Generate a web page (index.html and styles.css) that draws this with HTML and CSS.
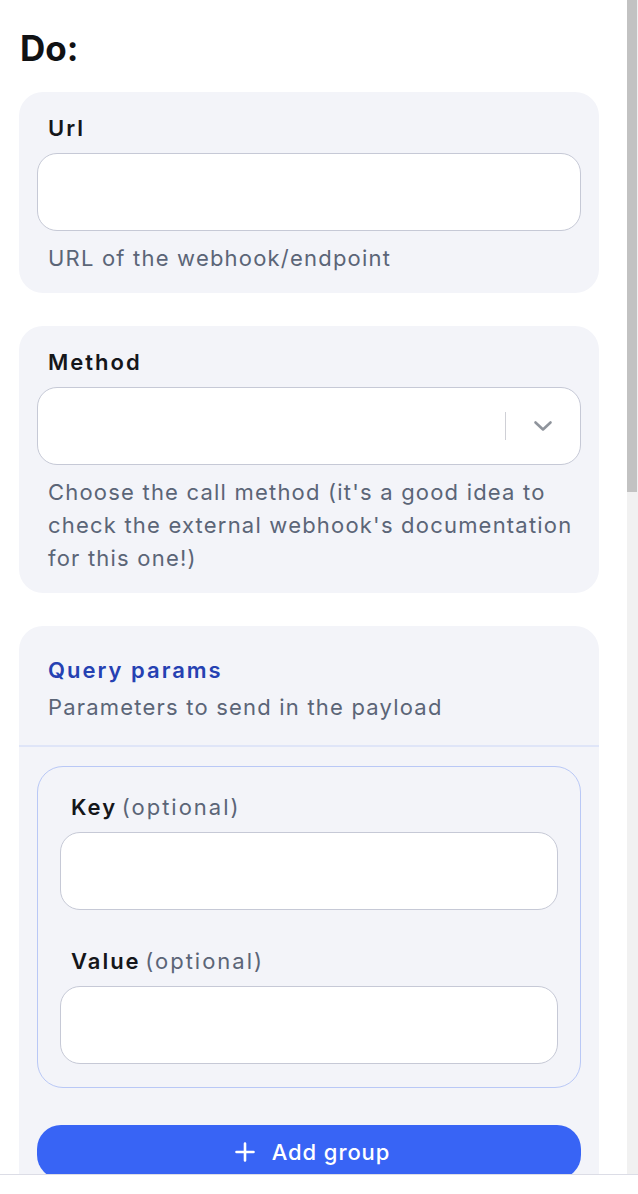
FILE: index.html
```html
<!DOCTYPE html>
<html lang="en">
<head>
<meta charset="utf-8">
<title>Do</title>
<link rel="stylesheet" href="styles.css">
</head>
<body>
<div class="screen">
  <div class="viewport">
    <main class="content">
      <h1 class="title">Do:</h1>

      <section class="card">
        <label class="field-label">Url</label>
        <div class="input"></div>
        <p class="help">URL of the webhook/endpoint</p>
      </section>

      <section class="card">
        <label class="field-label">Method</label>
        <div class="input select">
          <span class="select-divider"></span>
          <svg class="chevron" width="20" height="12" viewBox="0 0 20 12" aria-hidden="true">
            <path d="M2.5 2.5 L10 9.5 L17.5 2.5" fill="none" stroke="#8f949c" stroke-width="2.6" stroke-linecap="round" stroke-linejoin="round"/>
          </svg>
        </div>
        <p class="help">Choose the call method (it's a good idea to check the external webhook's documentation for this one!)</p>
      </section>

      <section class="card params">
        <div class="params-head">
          <h2 class="params-title">Query params</h2>
          <p class="params-sub">Parameters to send in the payload</p>
        </div>
        <div class="params-body">
          <div class="group">
            <label class="field-label">Key <span class="optional">(optional)</span></label>
            <div class="input"></div>
            <label class="field-label second">Value <span class="optional">(optional)</span></label>
            <div class="input"></div>
          </div>
          <button class="add-btn" type="button">
            <svg width="20" height="20" viewBox="0 0 20 20" aria-hidden="true">
              <path d="M10 1.5 V18.5 M1.5 10 H18.5" stroke="#fff" stroke-width="2.6" stroke-linecap="round"/>
            </svg>
            <span>Add group</span>
          </button>
        </div>
      </section>
    </main>
    <div class="scrollbar"><div class="thumb"></div></div>
  </div>
  <footer class="footer"></footer>
</div>
</body>
</html>
```

FILE: styles.css
```css
* { box-sizing: border-box; }

html, body {
  margin: 0;
  padding: 0;
  background: #ffffff;
}

body {
  font-family: Inter, "Noto Sans", "DejaVu Sans", sans-serif;
  color: #15161a;
}

.screen {
  width: 638px;
  height: 1194px;
  display: flex;
  flex-direction: column;
}

.viewport {
  display: flex;
  height: 1174px;
}

.content {
  flex: 1;
  overflow: hidden;
  padding: 27px 28px 0 19px;
}

.scrollbar {
  width: 11px;
  background: #f1f1f1;
  display: flex;
  flex-direction: column;
}

.thumb {
  height: 492px;
  width: 10px;
  background: #c2c2c2;
}

.footer {
  height: 20px;
  border-top: 1px solid #dcdde6;
  background: #ffffff;
}

.title {
  margin: 0 0 23px 1px;
  font-size: 35px;
  line-height: 42px;
  font-weight: 700;
  color: #111214;
}

.card {
  background: #f3f4f9;
  border-radius: 24px;
  padding: 20px 18px 18px;
  margin-bottom: 33px;
}

.field-label {
  display: block;
  font-size: 22px;
  line-height: 33px;
  font-weight: 600;
  letter-spacing: 2px;
  padding-left: 11px;
  color: #15161a;
}

.field-label .optional {
  margin-left: -3px;
  font-weight: 400;
  letter-spacing: 2px;
  color: #5b6577;
}

.input {
  height: 78px;
  margin-top: 8px;
  border: 1px solid #c6c9d6;
  border-radius: 20px;
  background: #ffffff;
}

.select {
  display: flex;
  align-items: center;
  justify-content: flex-end;
  gap: 27px;
  padding-right: 27px;
}

.select-divider {
  width: 1px;
  height: 28px;
  background: #cfd0d6;
}

.chevron {
  display: block;
}

.help {
  margin: 11px 0 0;
  padding-left: 11px;
  font-size: 22px;
  line-height: 33px;
  letter-spacing: 1.2px;
  color: #5b6577;
}

.params {
  padding: 0;
  margin-bottom: 0;
  border-radius: 24px 24px 0 0;
}

.params-head {
  padding: 28px 29px 21px;
  border-bottom: 2px solid #dfe5f8;
}

.params-title {
  margin: 0;
  font-size: 22px;
  line-height: 33px;
  font-weight: 600;
  letter-spacing: 2px;
  color: #2541b2;
}

.params-sub {
  margin: 4px 0 0;
  font-size: 22px;
  line-height: 33px;
  letter-spacing: 1.2px;
  color: #5b6577;
}

.params-body {
  padding: 19px 18px 40px;
}

.group {
  border: 1px solid #b9c8f6;
  border-radius: 26px;
  padding: 24px 22px 23px;
}

.group .field-label {
  padding-left: 11px;
}

.group .field-label.second {
  margin-top: 35px;
}

.add-btn {
  margin-top: 37px;
  width: 100%;
  height: 54px;
  border: none;
  border-radius: 24px;
  background: #3864f5;
  color: #ffffff;
  font-family: inherit;
  font-size: 22px;
  font-weight: 500;
  letter-spacing: 0.9px;
  display: flex;
  align-items: center;
  justify-content: center;
  gap: 17px;
  padding: 0 0 0 7px;
}

.add-btn svg {
  display: block;
}
```
